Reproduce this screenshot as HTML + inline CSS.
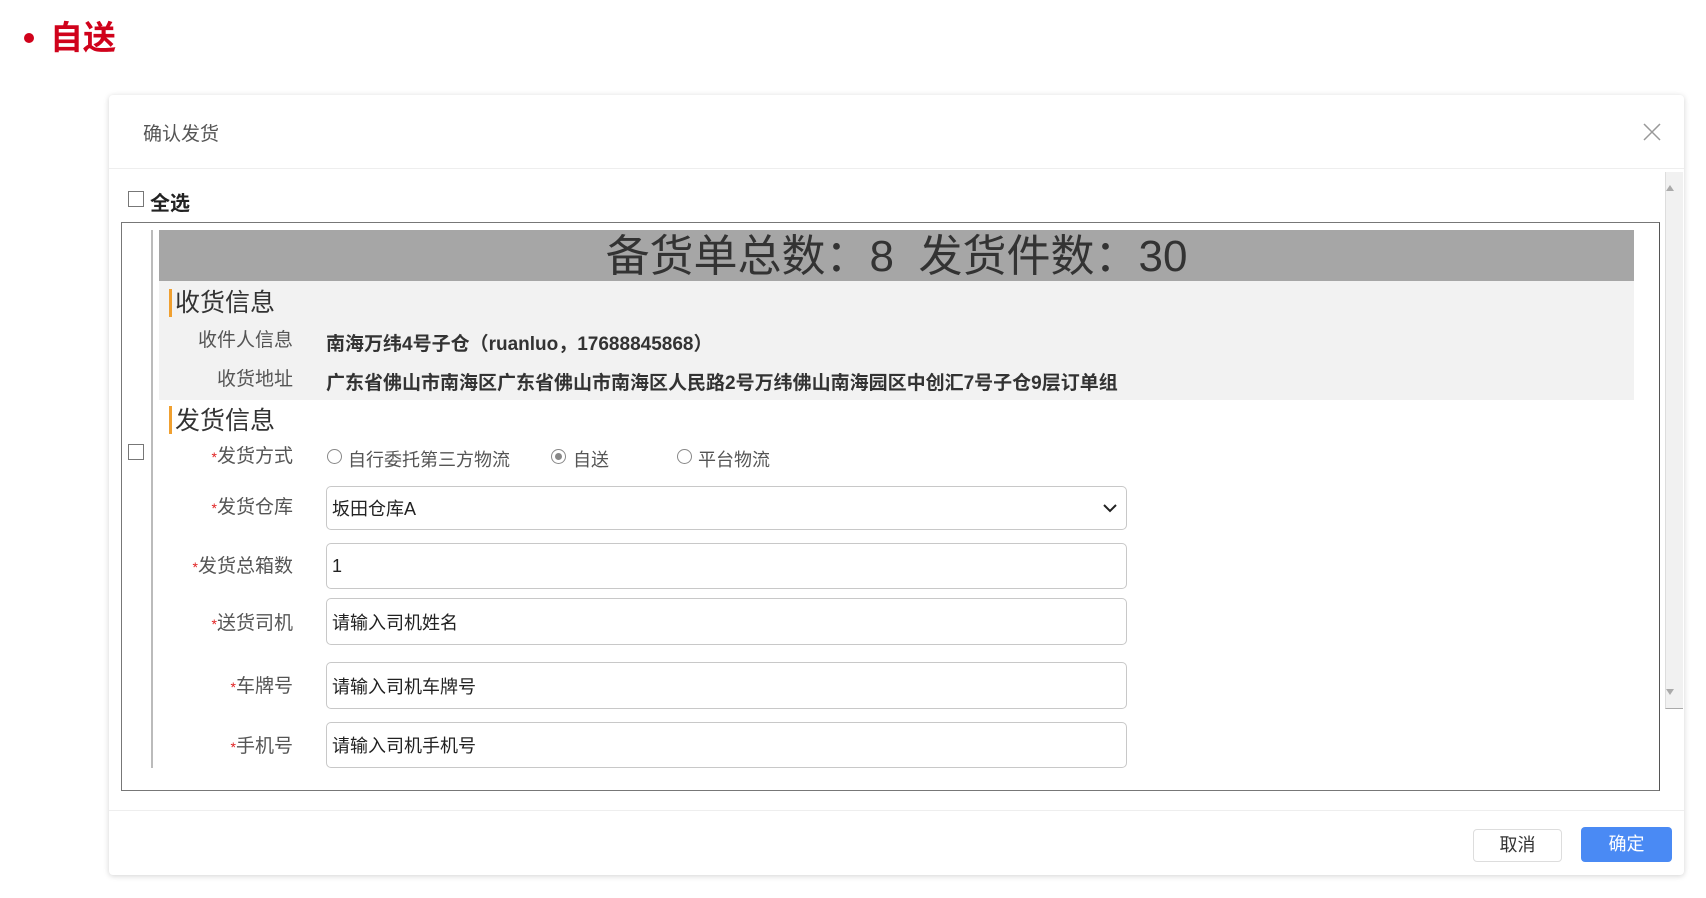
<!DOCTYPE html>
<html><head><meta charset="utf-8"><style>
*{box-sizing:border-box;margin:0;padding:0}
body{width:1706px;height:898px;background:#fff;position:relative;overflow:hidden;font-family:"Liberation Sans","Noto Sans CJK SC",sans-serif;color:#333}
.a{position:absolute;white-space:nowrap}
.lbl{position:absolute;right:1413px;font-size:19px;color:#555;line-height:20px}
.lbl i{color:#e02020;font-style:normal;font-size:14px}
.inp{position:absolute;left:326px;width:801px;border:1px solid #c8c8c8;border-radius:5px;background:#fff;font-size:18px;color:#222;padding-left:5px;display:flex;align-items:center}
.rad{position:absolute;width:15px;height:15px;border:1px solid #888;border-radius:50%;top:449px}
.rt{position:absolute;top:446px;font-size:18px;color:#555}
</style></head><body>
<div class="a" style="left:24px;top:33px;width:10px;height:10px;border-radius:50%;background:#d0021b"></div>
<div class="a" style="left:50px;top:18px;font-size:33px;font-weight:bold;color:#d0021b;line-height:40px">自送</div>

<div class="a" style="left:109px;top:95px;width:1575px;height:780px;background:#fff;border-radius:4px;box-shadow:0 1px 6px rgba(0,0,0,.18)"></div>
<div class="a" style="left:143px;top:119px;font-size:19px;color:#555">确认发货</div>
<svg class="a" style="left:1643px;top:123px" width="18" height="18" viewBox="0 0 18 18"><path d="M1 1L17 17M17 1L1 17" stroke="#999" stroke-width="1.5"/></svg>
<div class="a" style="left:109px;top:168px;width:1575px;height:1px;background:#eee"></div>

<div class="a" style="left:1665px;top:172px;width:18px;height:537px;background:#f1f1f1;border-left:1px solid #ddd;border-bottom:1px solid #aaa"></div>
<div class="a" style="left:1666px;top:185px;width:0;height:0;border-left:4px solid transparent;border-right:4px solid transparent;border-bottom:6px solid #aaa"></div>
<div class="a" style="left:1666px;top:689px;width:0;height:0;border-left:4px solid transparent;border-right:4px solid transparent;border-top:6px solid #aaa"></div>

<div class="a" style="left:128px;top:191px;width:16px;height:16px;border:1px solid #777"></div>
<div class="a" style="left:150px;top:187px;font-size:20px;font-weight:bold;color:#222">全选</div>

<div class="a" style="left:121px;top:222px;width:1539px;height:569px;border:1px solid #777;border-right-color:#555"></div>
<div class="a" style="left:151px;top:230px;width:2px;height:538px;background:#bbb"></div>
<div class="a" style="left:128px;top:444px;width:16px;height:16px;border:1px solid #777"></div>

<div class="a" style="left:159px;top:230px;width:1475px;height:51px;background:#a6a6a6;text-align:center;font-size:44px;line-height:54px;color:#333">备货单总数：8&nbsp;&nbsp;发货件数：30</div>
<div class="a" style="left:159px;top:281px;width:1475px;height:119px;background:#f2f2f2"></div>
<div class="a" style="left:169px;top:289px;width:3px;height:28px;background:#f0a030"></div>
<div class="a" style="left:175px;top:288px;font-size:25px;color:#333;line-height:30px">收货信息</div>
<div class="lbl" style="top:331px">收件人信息</div>
<div class="a" style="left:326px;top:329px;font-size:19px;font-weight:bold;color:#333">南海万纬4号子仓（ruanluo，17688845868）</div>
<div class="lbl" style="top:370px">收货地址</div>
<div class="a" style="left:326px;top:368px;font-size:19px;font-weight:bold;color:#333">广东省佛山市南海区广东省佛山市南海区人民路2号万纬佛山南海园区中创汇7号子仓9层订单组</div>

<div class="a" style="left:169px;top:406px;width:3px;height:28px;background:#f0a030"></div>
<div class="a" style="left:175px;top:406px;font-size:25px;color:#333;line-height:30px">发货信息</div>

<div class="lbl" style="top:447px"><i>*</i>发货方式</div>
<div class="rad" style="left:327px"></div><div class="rt" style="left:348px">自行委托第三方物流</div>
<div class="rad" style="left:551px"><div style="position:absolute;left:3px;top:3px;width:7px;height:7px;border-radius:50%;background:#888"></div></div><div class="rt" style="left:573px">自送</div>
<div class="rad" style="left:677px"></div><div class="rt" style="left:698px">平台物流</div>

<div class="lbl" style="top:498px"><i>*</i>发货仓库</div>
<div class="inp" style="top:486px;height:44px">坂田仓库A
<svg style="position:absolute;right:8px;top:15px" width="16" height="12" viewBox="0 0 16 12"><path d="M2 3L8 9L14 3" stroke="#222" stroke-width="2" fill="none"/></svg></div>
<div class="lbl" style="top:557px"><i>*</i>发货总箱数</div>
<div class="inp" style="top:543px;height:46px">1</div>
<div class="lbl" style="top:614px"><i>*</i>送货司机</div>
<div class="inp" style="top:598px;height:47px">请输入司机姓名</div>
<div class="lbl" style="top:677px"><i>*</i>车牌号</div>
<div class="inp" style="top:662px;height:47px">请输入司机车牌号</div>
<div class="lbl" style="top:737px"><i>*</i>手机号</div>
<div class="inp" style="top:722px;height:46px">请输入司机手机号</div>

<div class="a" style="left:109px;top:810px;width:1575px;height:1px;background:#eee"></div>
<div class="a" style="left:1473px;top:829px;width:89px;height:33px;border:1px solid #ddd;border-radius:4px;text-align:center;line-height:31px;font-size:18px;color:#333">取消</div>
<div class="a" style="left:1581px;top:827px;width:91px;height:35px;background:#4a8af4;border-radius:4px;text-align:center;line-height:35px;font-size:18px;color:#fff">确定</div>
</body></html>
